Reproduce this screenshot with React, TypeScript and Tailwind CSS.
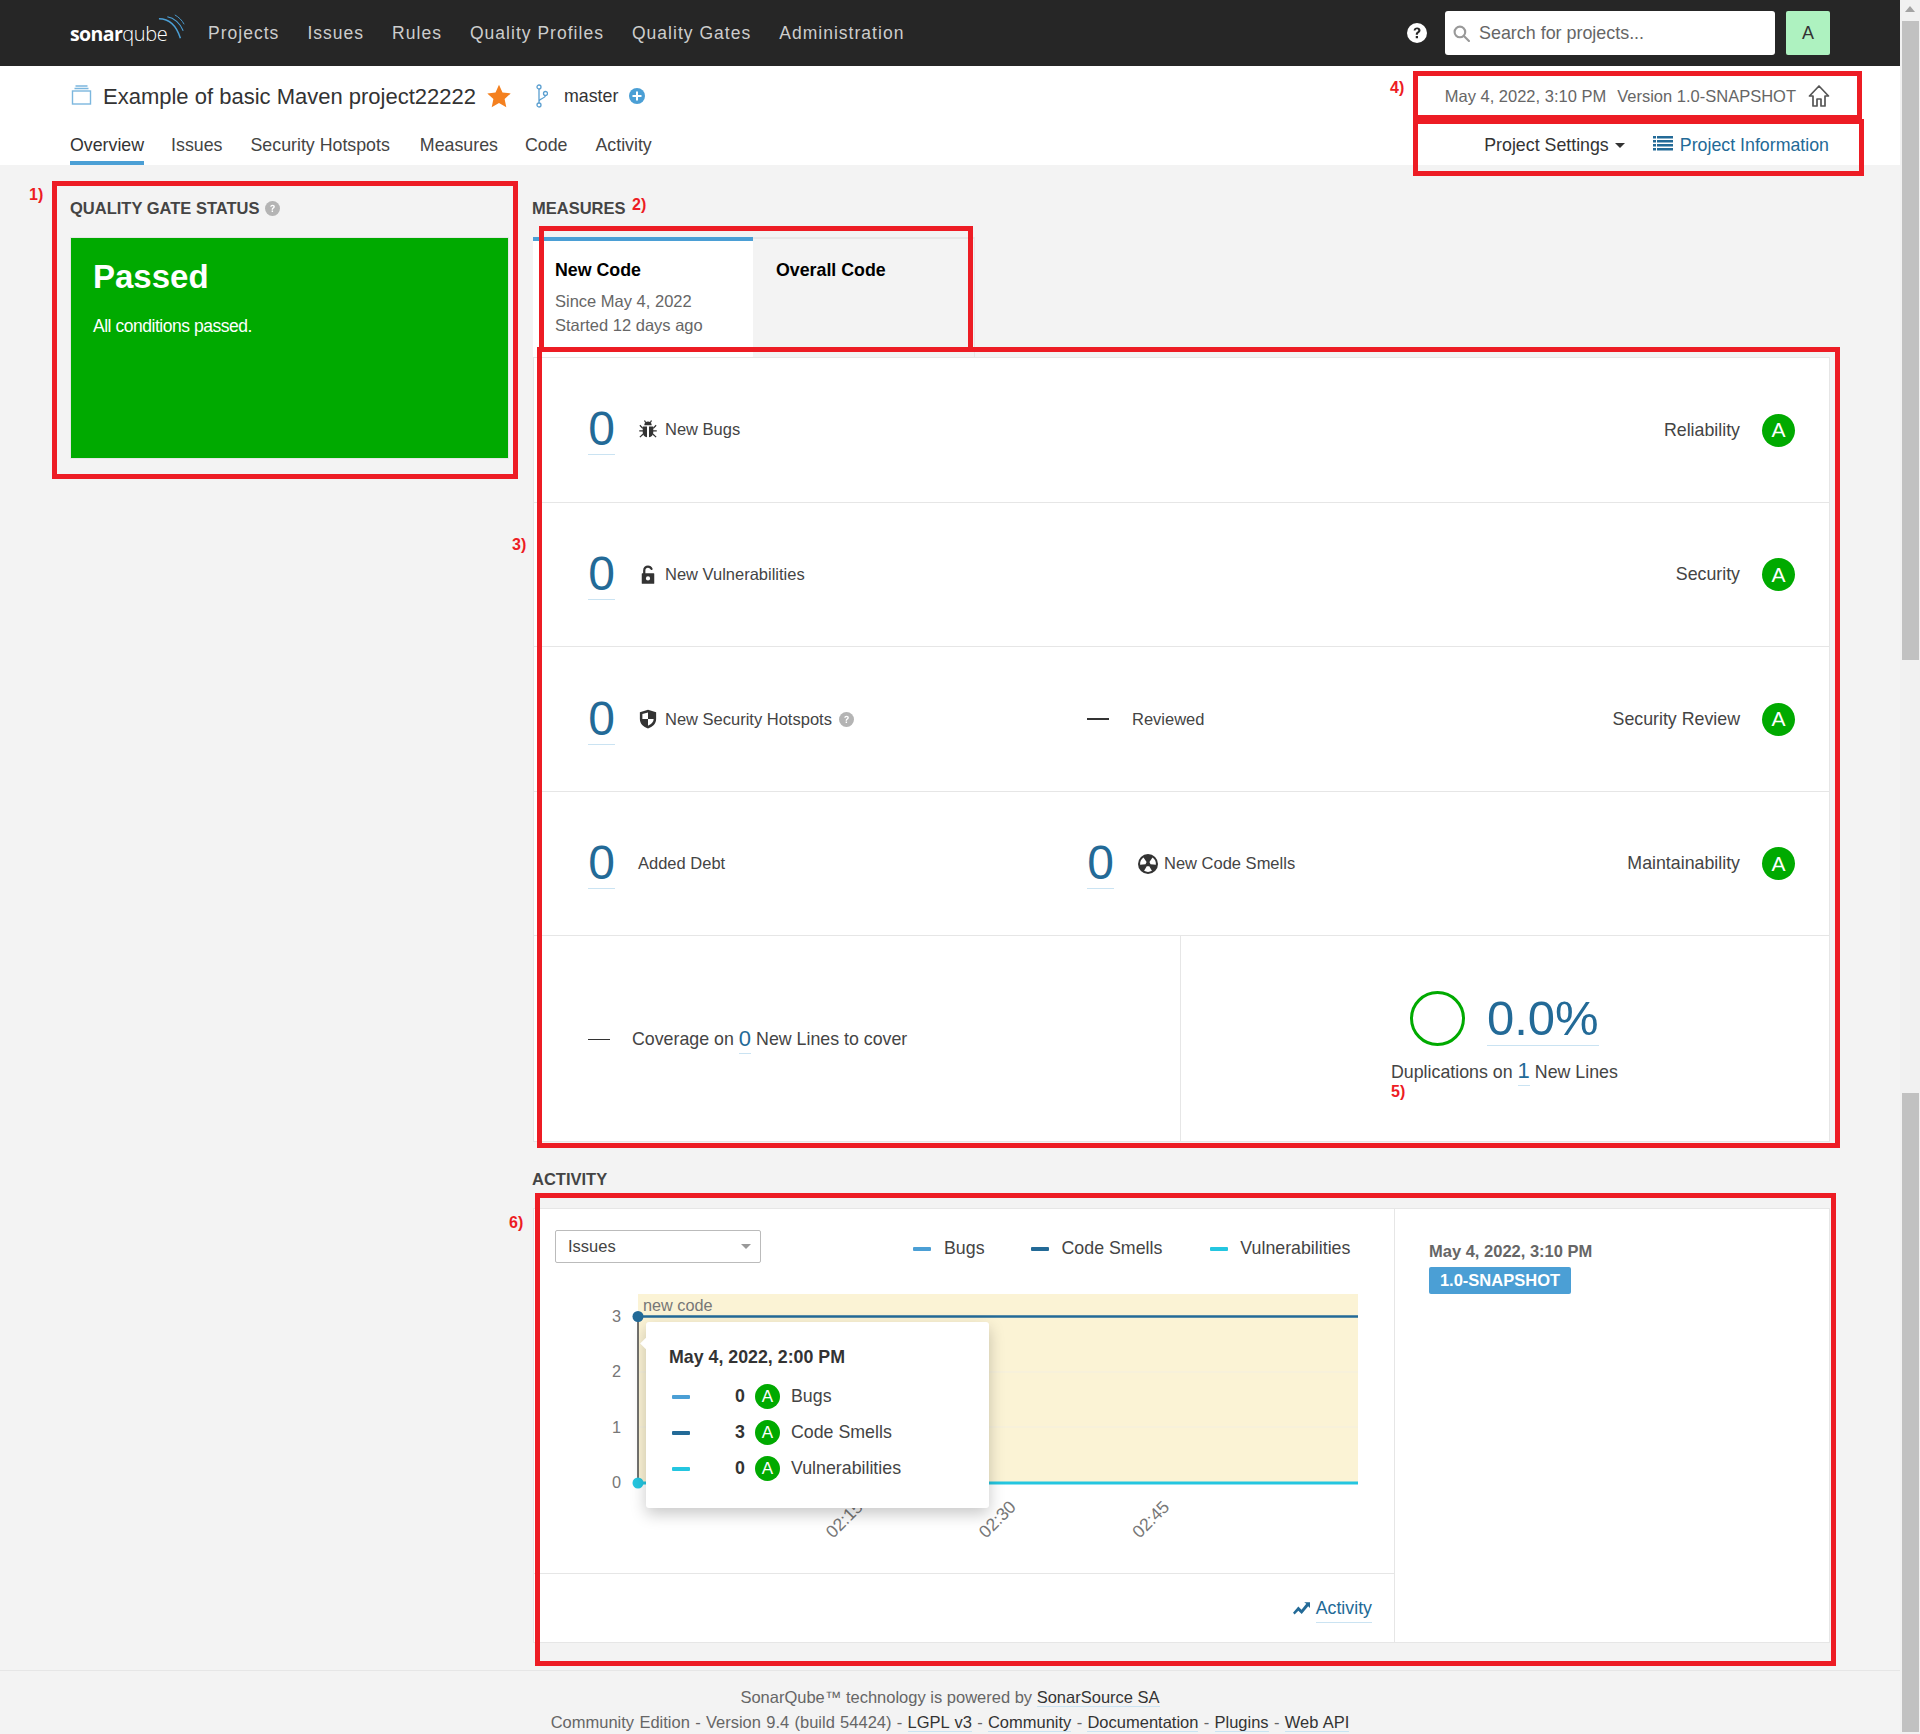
import React from "react";

const Q = ({ className = "" }: { className?: string }) => (
  <svg viewBox="0 0 16 16" className={className}>
    <circle cx="8" cy="8" r="8" fill="#b4b4b4" />
    <path d="M5.6 6.2C5.7 4.8 6.7 4 8.1 4c1.4 0 2.4.8 2.4 2 0 1-.6 1.5-1.3 2-.5.4-.7.6-.7 1.3H7.1c0-1.2.4-1.7 1-2.2.5-.4.9-.6.9-1.1 0-.5-.4-.8-.9-.8-.6 0-1 .4-1.1 1H5.6zM7.1 10.2h1.5v1.6H7.1z" fill="#fff" />
  </svg>
);

const BugIcon = () => (
  <svg viewBox="0 0 16 16" className="w-[20px] h-[20px] shrink-0">
    <path fill="#333" d="M5 5C5 3.300 6.300 2 8 2s3 1.300 3 3zM3.800 6h3.400v8.500C5.200 14.300 3.800 12.800 3.800 10.500zM8.800 6h3.400v4.500c0 2.300-1.400 3.800-3.400 4z" />
    <path stroke="#333" strokeWidth="1" fill="none" d="M5.200 1.200 6.200 3M10.800 1.200 9.800 3M1.500 5 3.800 7.500M14.500 5 12.200 7.500M1 9.500h3M15 9.500h-3M1.500 14.500 4.200 12M14.500 14.500 11.800 12" />
  </svg>
);
const LockIcon = () => (
  <svg viewBox="0 0 16 16" className="w-[20px] h-[20px] shrink-0">
    <path d="M5 7V4.300C5 2.500 6.300 1.200 8 1.200c1.300 0 2.300.7 2.800 1.900" fill="none" stroke="#333" strokeWidth="1.800" strokeLinecap="round" />
    <path fillRule="evenodd" fill="#333" d="M3.500 6.500h9a.5.5 0 0 1 .5.5v7.500a.5.5 0 0 1-.5.5h-9a.5.5 0 0 1-.5-.5V7a.5.5 0 0 1 .5-.5zM8 9a1.700 1.700 0 1 0 0 3.400A1.700 1.700 0 0 0 8 9z" />
  </svg>
);
const ShieldIcon = () => (
  <svg viewBox="0 0 16 16" className="w-[20px] h-[20px] shrink-0">
    <path fillRule="evenodd" fill="#333" d="M8 .5 14.500 2.500V8c0 3.700-2.800 6.400-6.500 7.500C4.300 14.400 1.500 11.700 1.500 8V2.500L8 .5zM8 2.700 3.500 4v4H8V2.700zM8 8v5.300c2.500-1 4.500-2.900 4.500-5.300H8z" />
  </svg>
);
const SmellIcon = () => (
  <svg viewBox="0 0 16 16" className="w-[20px] h-[20px] shrink-0">
    <circle cx="8" cy="8" r="8" fill="#333" />
    <path fill="#fff" d="M6 8.200 1.700 8.500A6.300 6.300 0 0 1 4.400 2.800L6.850 6.400zM10 8.200l4.300.3A6.300 6.300 0 0 0 11.600 2.800L9.150 6.400zM9 9.700l2.150 3.750a6.300 6.300 0 0 1-6.300 0L7 9.700z" />
  </svg>
);

const Grade = ({ small = false }: { small?: boolean }) =>
  small ? (
    <span className="w-[25px] h-[25px] rounded-full bg-[#00aa00] text-white flex items-center justify-center text-[17px] shrink-0">A</span>
  ) : (
    <span className="w-[33px] h-[33px] rounded-full bg-[#00aa00] text-white flex items-center justify-center text-[21px] shrink-0">A</span>
  );

const Zero = () => (
  <span className="inline-block text-[48px] leading-[50px] text-[#236a97] border-b border-[#cae3f2] w-[27px] text-center shrink-0">0</span>
);

const Row = ({ children, label, h, mb }: { children: React.ReactNode; label: string; h: string; mb: string }) => (
  <div className={`flex items-center border-b border-[#e6e6e6] pl-[54px] pr-[34px] ${h}`}>
    <div className={`flex-1 flex items-center ${mb}`}>{children}</div>
    <span className="text-[17.8px] text-[#444] mr-[22px]">{label}</span>
    <Grade />
  </div>
);

const FootLink = ({ children }: { children: React.ReactNode }) => (
  <span className="text-[#333] border-b border-[#cae3f2]">{children}</span>
);

const Dash = ({ className }: { className: string }) => <span className={`inline-block w-[18px] h-[4px] rounded-[1px] shrink-0 ${className}`} />;

export default function App() {
  return (
    <div className="relative flex w-[1920px] h-[1734px] overflow-hidden bg-[#f3f3f3] text-[#333] [font-family:Liberation_Sans,Arimo,Arial,sans-serif]">
      <div className="w-[1900px] shrink-0 flex flex-col">
        {/* top nav */}
        <header className="h-[66px] bg-[#262626] flex items-center pl-[70px] shrink-0">
          <div className="relative w-[116px] h-[66px] flex items-center">
            <span className="text-white text-[19.5px] font-bold tracking-[-0.6px] [font-family:Open_Sans,sans-serif] leading-none mt-[2px]">sonar</span>
            <span className="text-white text-[20px] font-light tracking-[-0.4px] [font-family:Open_Sans,sans-serif] leading-none mt-[2px]">qube</span>
            <svg viewBox="0 0 30 30" className="absolute left-[88px] top-[14px] w-[28px] h-[28px]" fill="none" stroke="#4b9fd5">
              <path d="M1 5c11 0 19 8 23 21" strokeWidth="1.600" />
              <path d="M10 3c7 1 14 7 17 15" strokeWidth="1.200" />
              <path d="M18 1c4 2 8 6 10 10" strokeWidth="1" />
            </svg>
          </div>
          <nav className="flex gap-[28px] ml-[22px] text-[17.5px] tracking-[1.02px] text-[#cdcdcd]">
            <span>Projects</span>
            <span>Issues</span>
            <span>Rules</span>
            <span>Quality Profiles</span>
            <span>Quality Gates</span>
            <span>Administration</span>
          </nav>
          <svg viewBox="0 0 16 16" className="ml-auto w-[20px] h-[20px]">
            <circle cx="8" cy="8" r="8" fill="#fff" />
            <path d="M5.300 6C5.400 4.500 6.500 3.500 8.100 3.500c1.600 0 2.700 1 2.700 2.300 0 1.100-.6 1.600-1.300 2.100-.6.400-.8.700-.8 1.500H7c0-1.300.4-1.900 1.100-2.400.5-.4.900-.6.900-1.100 0-.5-.4-.9-1-.9-.7 0-1.100.4-1.200 1H5.300zM7 10.300h1.800v1.900H7z" fill="#262626" />
          </svg>
          <div className="ml-[18px] w-[330px] h-[44px] bg-white rounded-[3px] flex items-center pl-[8px]">
            <svg viewBox="0 0 16 16" className="w-[17px] h-[17px]" fill="none" stroke="#999" strokeWidth="2">
              <circle cx="6.500" cy="6.500" r="5" />
              <path d="M10.500 10.500 15 15" strokeLinecap="round" />
            </svg>
            <span className="ml-[9px] text-[17.9px] text-[#666]">Search for projects...</span>
          </div>
          <div className="ml-[11px] mr-[70px] w-[44px] h-[44px] bg-[#aef2c0] rounded-[2px] flex items-center justify-center text-[18px] text-[#333]">A</div>
        </header>

        {/* project header */}
        <div className="h-[99px] bg-white pl-[70px] pr-[71px] shrink-0 flex flex-col">
          <div className="flex items-center h-[60px]">
            <svg viewBox="0 0 20 20" className="w-[21px] h-[20px] mt-[-2px] ml-[1px]" fill="none" stroke="#7cb7de" strokeWidth="1.400">
              <rect x="1" y="6" width="18" height="13" />
              <path d="M3 3.500h14M4 1h12" />
            </svg>
            <span className="ml-[11px] text-[22px] text-[#333]">Example of basic Maven project22222</span>
            <svg viewBox="0 0 24 24" className="ml-[11px] w-[24px] h-[24px]" fill="#f4801f">
              <path d="M12 .8l3.500 7.600 8.200 1-6.100 5.600 1.700 8.200L12 19.100l-7.300 4.100 1.700-8.200L.300 9.400l8.200-1z" />
            </svg>
            <svg viewBox="0 0 12 24" className="ml-[25px] w-[12px] h-[24px]" fill="none" stroke="#5b9fd0" strokeWidth="1.300">
              <circle cx="3" cy="3" r="2" />
              <circle cx="3" cy="21" r="2" />
              <circle cx="9.500" cy="9.500" r="2" />
              <path d="M3 5v14M9.500 11.500c0 3-6.500 3-6.500 6" />
            </svg>
            <span className="ml-[16px] text-[17.8px] text-[#333]">master</span>
            <svg viewBox="0 0 16 16" className="ml-[11px] w-[16px] h-[16px]">
              <circle cx="8" cy="8" r="8" fill="#4b9fd5" />
              <path d="M7 3.500h2V7h3.500v2H9v3.500H7V9H3.500V7H7z" fill="#fff" />
            </svg>
            <span className="ml-auto text-[16.5px] text-[#666]">May 4, 2022, 3:10 PM</span>
            <span className="ml-[11px] text-[16.5px] text-[#666]">Version 1.0-SNAPSHOT</span>
            <svg viewBox="0 0 22 24" className="ml-[12px] -mr-[1px] w-[22px] h-[24px]" fill="none" stroke="#555" strokeWidth="1.700" strokeLinejoin="round">
              <path d="M1.500 12 11 2l9.500 10H17v10h-4v-7H9v7H5V12z" />
            </svg>
          </div>
          <div className="flex items-start text-[17.8px] text-[#444] h-[39px]">
            <span className="text-[#333] h-[39px] border-b-[4px] border-[#4b9fd5] pt-[6px]">Overview</span>
            <span className="ml-[27px] pt-[6px]">Issues</span>
            <span className="ml-[28px] pt-[6px]">Security Hotspots</span>
            <span className="ml-[30px] pt-[6px]">Measures</span>
            <span className="ml-[27px] pt-[6px]">Code</span>
            <span className="ml-[28px] pt-[6px]">Activity</span>
            <span className="ml-auto pt-[6px] text-[#333]">Project Settings</span>
            <span className="ml-[6px] mt-[17px] w-0 h-0 border-x-[5px] border-x-transparent border-t-[5px] border-t-[#333]" />
            <svg viewBox="0 0 20 16" className="ml-[28px] mt-[9px] w-[20px] h-[16px]" fill="#236a97">
              <path d="M0 1h3v2.500H0zM4 1h16v2.500H4zM0 5h3v2.500H0zM4 5h16v2.500H4zM0 9h3v2.500H0zM4 9h16v2.500H4zM0 13h3v2.500H0zM4 13h16v2.500H4z" />
            </svg>
            <span className="ml-[7px] pt-[6px] text-[#236a97]">Project Information</span>
          </div>
        </div>

        {/* body */}
        <div className="flex pl-[70px] h-[1505px]">
          <div className="w-[439px] shrink-0">
            <div className="flex items-center h-[24px] mt-[31px] gap-[6px]">
              <span className="text-[16.5px] font-bold text-[#444] whitespace-nowrap">QUALITY GATE STATUS</span>
              <Q className="w-[15px] h-[15px]" />
            </div>
            <div className="mt-[17px] w-[439px] h-[222px] bg-[#00aa00] border border-[#e6e6e6] pt-[19px] pl-[22px] text-white">
              <div className="text-[33px] font-bold leading-[40px]">Passed</div>
              <div className="mt-[17px] text-[17.5px] leading-[24px] tracking-[-0.47px]">All conditions passed.</div>
            </div>
          </div>
          <div className="ml-[24px] w-[1297px] shrink-0">
            <div className="flex items-center h-[24px] mt-[31px]">
              <span className="text-[16.5px] font-bold text-[#444] -ml-[1px]">MEASURES</span>
            </div>
            {/* tabs */}
            <div className="flex mt-[17px] h-[120px]">
              <div className="w-[220px] bg-white border-t-[4px] border-[#4b9fd5] pl-[22px] pt-[17px] text-[#666]">
                <div className="text-[17.8px] font-bold text-black leading-[24px]">New Code</div>
                <div className="text-[16.5px] mt-[7px] leading-[24px]">Since May 4, 2022</div>
                <div className="text-[16.5px] leading-[24px]">Started 12 days ago</div>
              </div>
              <div className="w-[222px] border-t-[2px] border-r border-[#e6e6e6] pl-[23px] pt-[19px]">
                <div className="text-[17.8px] font-bold text-black leading-[24px]">Overall Code</div>
              </div>
            </div>
            {/* measures */}
            <div className="w-[1297px] bg-white border border-[#e6e6e6]">
              <Row label="Reliability" h="h-[145px]" mb="mb-[2px]">
                <Zero />
                <span className="ml-[23px]"><BugIcon /></span>
                <span className="ml-[7px] text-[16.5px] text-[#444]">New Bugs</span>
              </Row>
              <Row label="Security" h="h-[144px]" mb="mb-0">
                <Zero />
                <span className="ml-[23px]"><LockIcon /></span>
                <span className="ml-[7px] text-[16.5px] text-[#444]">New Vulnerabilities</span>
              </Row>
              <Row label="Security Review" h="h-[145px]" mb="mb-0">
                <div className="w-[499px] flex items-center">
                  <Zero />
                  <span className="ml-[23px]"><ShieldIcon /></span>
                  <span className="ml-[7px] text-[16.5px] text-[#444]">New Security Hotspots</span>
                  <Q className="ml-[7px] w-[15px] h-[15px]" />
                </div>
                <span className="w-[22px] h-[2px] bg-[#333]" />
                <span className="ml-[23px] text-[16.5px] text-[#444]">Reviewed</span>
              </Row>
              <Row label="Maintainability" h="h-[144px]" mb="mb-0">
                <div className="w-[499px] flex items-center">
                  <Zero />
                  <span className="ml-[23px] text-[16.5px] text-[#444]">Added Debt</span>
                </div>
                <Zero />
                <span className="ml-[24px]"><SmellIcon /></span>
                <span className="ml-[6px] text-[16.5px] text-[#444]">New Code Smells</span>
              </Row>
              <div className="flex h-[205px]">
                <div className="w-[647px] border-r border-[#e6e6e6] flex items-center pl-[54px] pt-[2px] text-[17.8px] text-[#444]">
                  <span className="w-[22px] h-[1px] bg-[#333]" />
                  <span className="ml-[22px]">Coverage on</span>
                  <span className="ml-[5px] text-[#236a97] text-[22px] leading-[28px] border-b border-[#cae3f2]">0</span>
                  <span className="ml-[5px]">New Lines to cover</span>
                </div>
                <div className="flex-1 flex flex-col items-start pl-[210px] pt-[55px] text-[17.8px] text-[#444]">
                  <div className="flex items-center ml-[19px]">
                    <span className="w-[55px] h-[55px] rounded-full border-[3.5px] border-[#00aa00]" />
                    <span className="ml-[22px] text-[49px] leading-[54px] text-[#236a97] border-b border-[#cae3f2]">0.0%</span>
                  </div>
                  <div className="flex items-center mt-[11px] leading-[28px]">
                    <span>Duplications on</span>
                    <span className="ml-[5px] text-[#236a97] text-[22px] leading-[28px] border-b border-[#cae3f2]">1</span>
                    <span className="ml-[5px]">New Lines</span>
                  </div>
                </div>
              </div>
            </div>

            <div className="mt-[25px] h-[24px] flex items-center">
              <span className="text-[16.5px] font-bold text-[#444] -ml-[1px]">ACTIVITY</span>
            </div>
            {/* activity */}
            <div className="mt-[17px] w-[1297px] h-[435px] bg-white border border-[#e6e6e6] flex">
              <div className="w-[861px] border-r border-[#e6e6e6] flex flex-col shrink-0">
                <div className="flex items-start h-[76px] pl-[21px] pt-[21px] text-[17.8px]">
                  <div className="w-[206px] h-[33px] border border-[#bbb] rounded-[2px] flex items-center pl-[12px] pr-[9px] text-[16.5px] text-[#444]">
                    Issues
                    <span className="ml-auto w-0 h-0 border-x-[5px] border-x-transparent border-t-[5px] border-t-[#999]" />
                  </div>
                  <div className="flex items-center h-[33px] mt-[2px] ml-[152px] text-[#444]">
                    <Dash className="bg-[#4b9fd5]" />
                    <span className="ml-[13px]">Bugs</span>
                    <Dash className="ml-[46px] bg-[#236a97]" />
                    <span className="ml-[13px]">Code Smells</span>
                    <Dash className="ml-[48px] bg-[#24c6e0]" />
                    <span className="ml-[12px]">Vulnerabilities</span>
                  </div>
                </div>
                <div className="relative h-[289px] border-b border-[#e6e6e6]">
                  <svg viewBox="0 0 860 289" className="absolute left-0 top-0 w-[860px] h-[289px]">
                    <rect x="104" y="9" width="720" height="189" fill="#fbf3d5" />
                    <line x1="104" x2="824" y1="87" y2="87" stroke="#f3efe0" />
                    <line x1="104" x2="824" y1="142" y2="142" stroke="#f3efe0" />
                    <text x="109" y="26" fontSize="16.250" fill="#777">new code</text>
                    <line x1="104" x2="104" y1="31" y2="198" stroke="#444" strokeWidth="1.500" />
                    <line x1="104" x2="824" y1="31.500" y2="31.500" stroke="#236a97" strokeWidth="2.500" />
                    <line x1="104" x2="824" y1="198" y2="198" stroke="#24c6e0" strokeWidth="3" />
                    <circle cx="104" cy="31.500" r="5.500" fill="#236a97" />
                    <circle cx="104" cy="198" r="5.500" fill="#24c6e0" />
                    <g fontSize="16.250" fill="#777" textAnchor="end">
                      <text x="87" y="37">3</text>
                      <text x="87" y="92">2</text>
                      <text x="87" y="148">1</text>
                      <text x="87" y="203">0</text>
                    </g>
                    <g fontSize="17.500" fill="#777" textAnchor="end">
                      <text transform="translate(330 223) rotate(-45)">02:15</text>
                      <text transform="translate(483 223) rotate(-45)">02:30</text>
                      <text transform="translate(636.500 223) rotate(-45)">02:45</text>
                    </g>
                  </svg>
                  <div className="absolute left-[112px] top-[37px] w-[343px] h-[186px] bg-white rounded-[3px] shadow-[0_6px_16px_rgba(0,0,0,0.22)] pl-[23px] pt-[23px]">
                    <span className="absolute -left-[4.5px] top-[16.5px] w-[9px] h-[9px] bg-white rotate-45" />
                    <div className="text-[17.8px] font-bold text-[#333] leading-[24px]">May 4, 2022, 2:00 PM</div>
                    <div className="mt-[15px] flex flex-col gap-[11px] text-[17.8px] text-[#444]">
                      <div className="flex items-center h-[25px]">
                        <Dash className="ml-[3px] bg-[#4b9fd5]" />
                        <span className="w-[55px] text-right font-bold text-[#333]">0</span>
                        <span className="ml-[10px]"><Grade small /></span>
                        <span className="ml-[11px]">Bugs</span>
                      </div>
                      <div className="flex items-center h-[25px]">
                        <Dash className="ml-[3px] bg-[#236a97]" />
                        <span className="w-[55px] text-right font-bold text-[#333]">3</span>
                        <span className="ml-[10px]"><Grade small /></span>
                        <span className="ml-[11px]">Code Smells</span>
                      </div>
                      <div className="flex items-center h-[25px]">
                        <Dash className="ml-[3px] bg-[#24c6e0]" />
                        <span className="w-[55px] text-right font-bold text-[#333]">0</span>
                        <span className="ml-[10px]"><Grade small /></span>
                        <span className="ml-[11px]">Vulnerabilities</span>
                      </div>
                    </div>
                  </div>
                </div>
                <div className="flex-1 flex items-center justify-end pr-[22px] pt-[2px] text-[17.8px] text-[#236a97]">
                  <svg viewBox="0 0 16 16" className="w-[17px] h-[17px] mr-[6px] -mt-[4px]" fill="#236a97">
                    <path d="M0 13l5-6 3 3 4.500-5.500L10.500 3H16v5.500l-1.700-1.700L8.200 14 5 11l-3.500 3.500z" />
                  </svg>
                  <span className="border-b border-[#cae3f2]">Activity</span>
                </div>
              </div>
              <div className="pl-[34px] pt-[31px]">
                <div className="text-[16.5px] font-bold text-[#666] leading-[22px]">May 4, 2022, 3:10 PM</div>
                <div className="mt-[5px] w-[142px] h-[27px] bg-[#4b9fd5] rounded-[2px] text-white font-bold text-[16.5px] flex items-center justify-center">1.0-SNAPSHOT</div>
              </div>
            </div>
          </div>
        </div>
      </div>

      <div className="absolute left-0 top-[1670px] w-[1900px] h-[64px] border-t border-[#e6e6e6] bg-[#f3f3f3] text-center text-[16.5px] text-[#666] pt-[14px] leading-[25px]">
        <div>
          SonarQube™ technology is powered by <FootLink>SonarSource SA</FootLink>
        </div>
        <div className="[word-spacing:0.7px]">
          Community Edition - Version 9.4 (build 54424) - <FootLink>LGPL v3</FootLink> - <FootLink>Community</FootLink> - <FootLink>Documentation</FootLink> - <FootLink>Plugins</FootLink> - <FootLink>Web API</FootLink>
        </div>
      </div>

      {/* scrollbar */}
      <aside className="w-[20px] shrink-0 bg-[#f1f1f1] flex flex-col items-center pt-[6px]">
        <span className="w-0 h-0 border-x-[5px] border-x-transparent border-b-[6px] border-b-[#a3a3a3]" />
        <span className="mt-[9px] w-[17px] h-[639px] bg-[#c1c1c1]" />
        <span className="mt-[433px] w-[17px] h-[639px] bg-[#c1c1c1]" />
      </aside>

      {/* annotations */}
      <div className="absolute left-[52px] top-[181px] w-[466px] h-[298px] border-[5px] border-[#ed1c24]" />
      <div className="absolute left-[539px] top-[226px] w-[434px] h-[126px] border-[5px] border-[#ed1c24]" />
      <div className="absolute left-[537px] top-[347px] w-[1303px] h-[801px] border-[5px] border-[#ed1c24]" />
      <div className="absolute left-[1413px] top-[71px] w-[449px] h-[49px] border-[5px] border-[#ed1c24]" />
      <div className="absolute left-[1413px] top-[119px] w-[451px] h-[57px] border-[5px] border-[#ed1c24]" />
      <div className="absolute left-[535px] top-[1193px] w-[1301px] h-[473px] border-[5px] border-[#ed1c24]" />
      <span className="absolute left-[29px] top-[183px] text-[16px] font-bold text-[#ed1c24]">1)</span>
      <span className="absolute left-[632px] top-[193px] text-[16px] font-bold text-[#ed1c24]">2)</span>
      <span className="absolute left-[512px] top-[533px] text-[16px] font-bold text-[#ed1c24]">3)</span>
      <span className="absolute left-[1390px] top-[76px] text-[16px] font-bold text-[#ed1c24]">4)</span>
      <span className="absolute left-[1391px] top-[1080px] text-[16px] font-bold text-[#ed1c24]">5)</span>
      <span className="absolute left-[509px] top-[1211px] text-[16px] font-bold text-[#ed1c24]">6)</span>
    </div>
  );
}
